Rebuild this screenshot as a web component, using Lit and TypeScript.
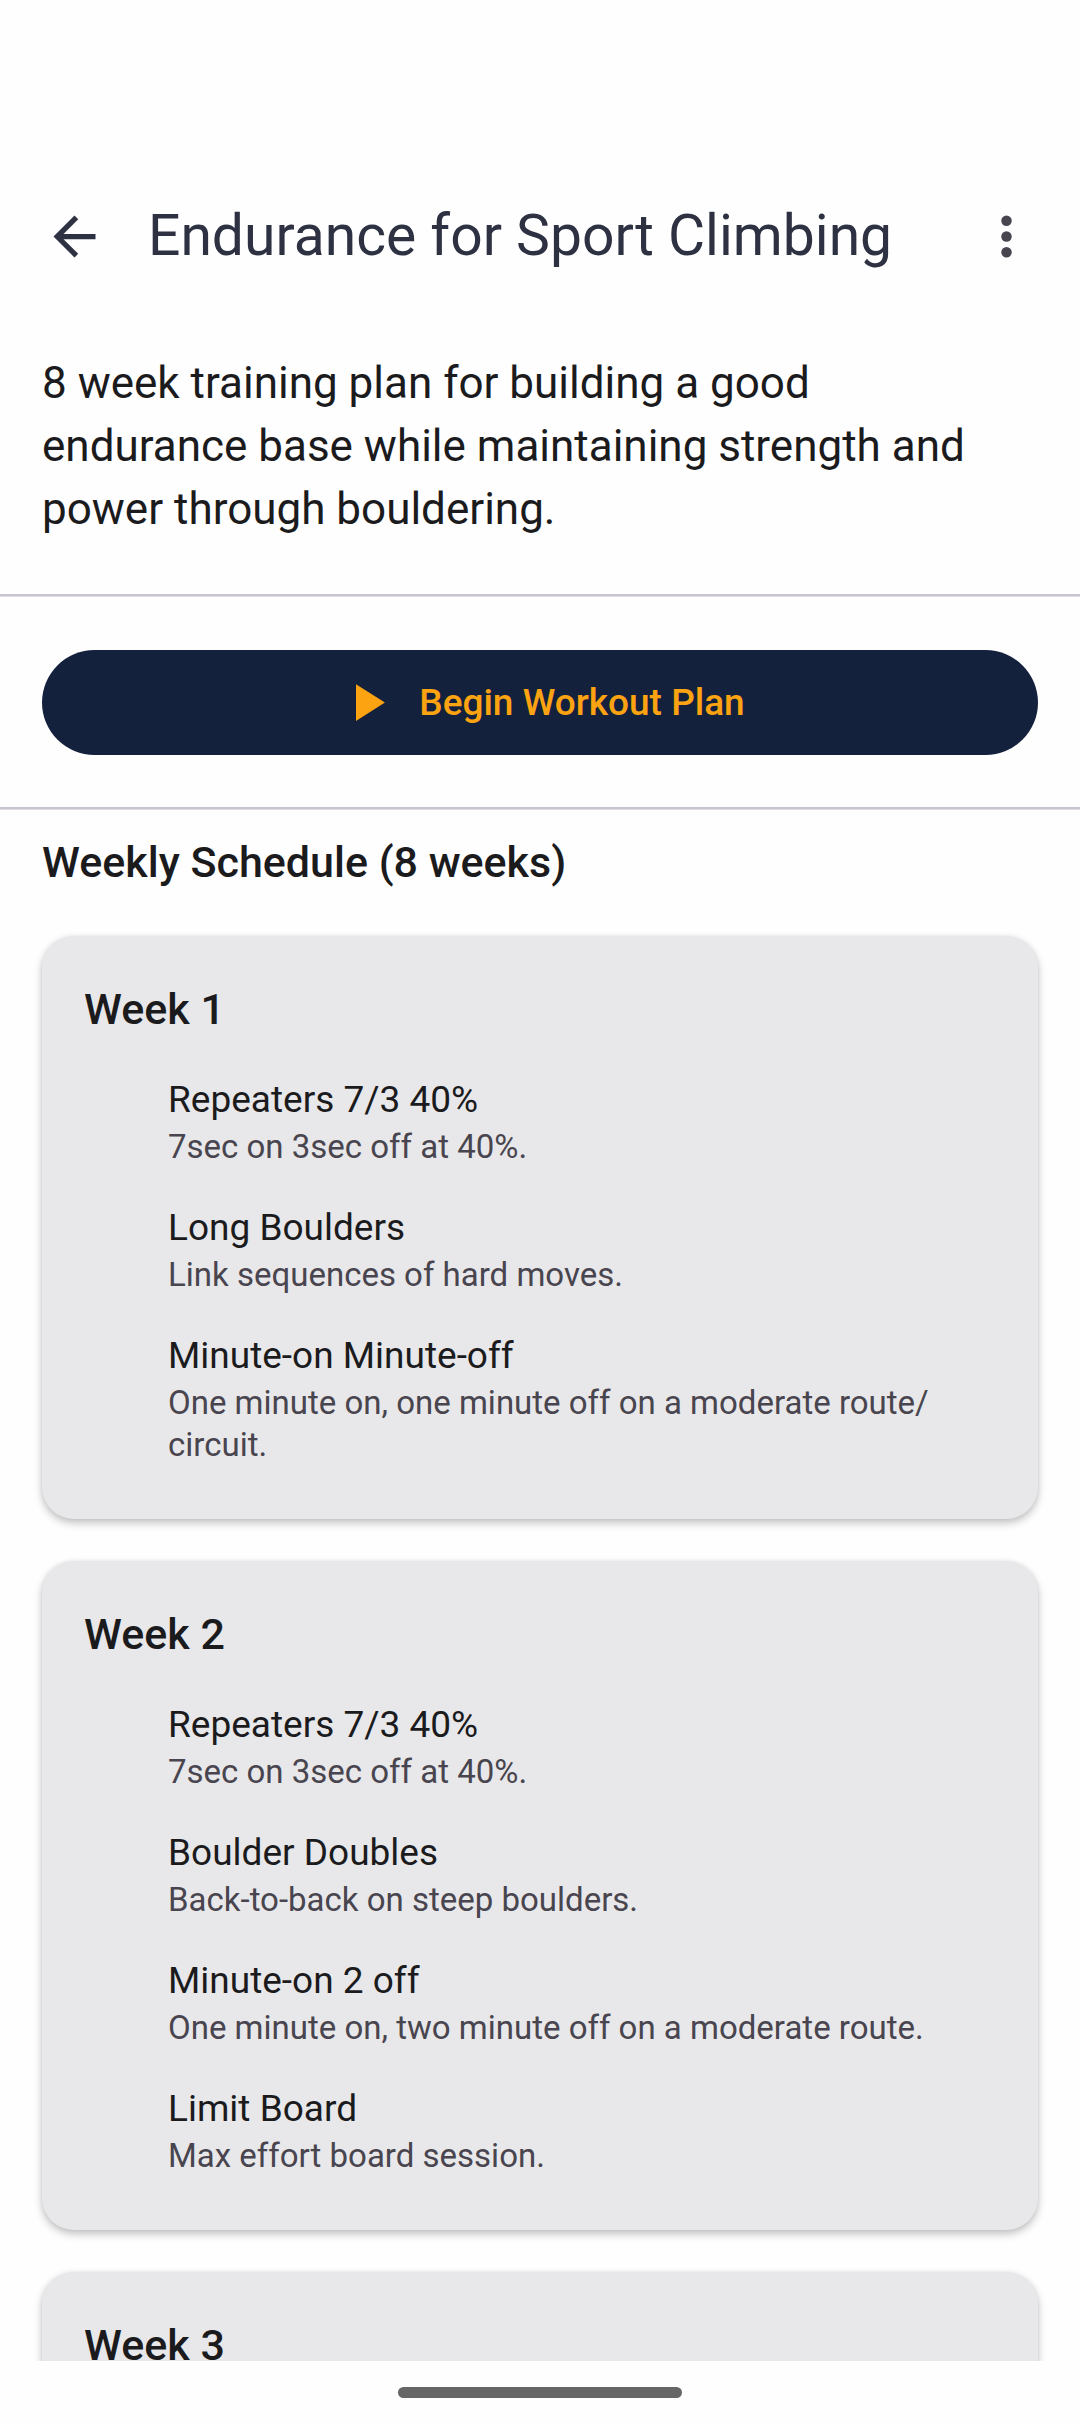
import { LitElement, html, css } from "lit";
import { customElement, property } from "lit/decorators.js";

interface Workout {
  name: string;
  detail: string;
}

interface Week {
  title: string;
  workouts: Workout[];
}

const WEEKS: Week[] = [
  {
    title: "Week 1",
    workouts: [
      { name: "Repeaters 7/3 40%", detail: "7sec on 3sec off at 40%." },
      { name: "Long Boulders", detail: "Link sequences of hard moves." },
      {
        name: "Minute-on Minute-off",
        detail: "One minute on, one minute off on a moderate route/circuit.",
      },
    ],
  },
  {
    title: "Week 2",
    workouts: [
      { name: "Repeaters 7/3 40%", detail: "7sec on 3sec off at 40%." },
      { name: "Boulder Doubles", detail: "Back-to-back on steep boulders." },
      { name: "Minute-on 2 off", detail: "One minute on, two minute off on a moderate route." },
      { name: "Limit Board", detail: "Max effort board session." },
    ],
  },
  { title: "Week 3", workouts: [] },
];

/** Lets a line break after each slash. */
const breakable = (text: string) =>
  text.split("/").map((part, i) => (i === 0 ? part : html`/<wbr />${part}`));

@customElement("week-card")
export class WeekCard extends LitElement {
  @property({ attribute: false }) week: Week = { title: "", workouts: [] };

  static styles = css`
    :host {
      display: block;
    }
    .card {
      padding: 42px 42px 53px;
      border-radius: 32px;
      background: #e8e8ea;
      box-shadow: 0 4px 8px rgba(0, 0, 0, 0.24), 0 0 4px rgba(0, 0, 0, 0.06);
    }
    .title {
      margin: 0;
      font-size: 43px;
      line-height: 63px;
      font-weight: 500;
    }
    .list {
      display: flex;
      flex-direction: column;
      gap: 34px;
      margin: 33px 0 0;
      padding: 0 0 0 84px;
      list-style: none;
    }
    .name,
    .detail {
      margin: 0;
      font-weight: 400;
    }
    .name {
      font-size: 37px;
      line-height: 52px;
    }
    .detail {
      font-size: 33px;
      line-height: 42px;
      color: #49454f;
    }
  `;

  render() {
    return html`
      <article class="card">
        <h3 class="title">${this.week.title}</h3>
        <ul class="list">
          ${this.week.workouts.map(
            (w) => html`<li>
              <h4 class="name">${w.name}</h4>
              <p class="detail">${breakable(w.detail)}</p>
            </li>`
          )}
        </ul>
      </article>
    `;
  }
}

@customElement("app-root")
export class AppRoot extends LitElement {
  static styles = css`
    :host {
      display: flex;
      flex-direction: column;
      height: 100vh;
      background: #fefefe;
      color: #1b1b1d;
      font-family: Roboto, "Liberation Sans", sans-serif;
    }
    .bar {
      display: flex;
      align-items: center;
      flex: none;
      height: 168px;
      padding: 152px 11px 0;
    }
    .icon-button {
      display: grid;
      place-items: center;
      flex: none;
      width: 126px;
      height: 126px;
      padding: 0;
      border: 0;
      background: none;
      color: #2d3142;
    }
    .more {
      color: #49454f;
    }
    .icon {
      width: 63px;
      height: 63px;
      fill: currentColor;
    }
    .heading {
      flex: 1;
      margin: 0 11px;
      font-size: 57px;
      line-height: 74px;
      font-weight: 400;
      color: #2d3142;
    }
    .content {
      flex: 1;
      min-height: 0;
      overflow-y: auto;
      scrollbar-width: none;
    }
    .summary {
      margin: 0;
      padding: 32px 84px 53px 42px;
      font-size: 44px;
      line-height: 63px;
    }
    .rule {
      height: 3px;
      margin: 0;
      border: 0;
      background: linear-gradient(#cac4d0 2px, #dfdbe3 2px);
    }
    .action {
      padding: 53px 42px 52px;
    }
    .begin {
      display: flex;
      align-items: center;
      justify-content: center;
      gap: 21px;
      width: 100%;
      height: 105px;
      padding: 0;
      border: 0;
      border-radius: 53px;
      background: #14213d;
      color: #fca311;
      font-family: inherit;
      font-size: 37px;
      line-height: 53px;
      font-weight: 500;
    }
    .section {
      margin: 0;
      padding: 21px 42px 42px;
      font-size: 43px;
      line-height: 63px;
      font-weight: 500;
    }
    .weeks {
      display: flex;
      flex-direction: column;
      gap: 42px;
      padding: 0 42px 42px;
    }
    .nav {
      display: flex;
      align-items: center;
      justify-content: center;
      flex: none;
      height: 63px;
    }
    .handle {
      width: 284px;
      height: 11px;
      border-radius: 6px;
      background: #666666;
    }
  `;

  render() {
    return html`
      <header class="bar">
        <button class="icon-button" aria-label="Back">
          <svg class="icon" viewBox="0 0 24 24" aria-hidden="true">
            <path d="M20 11H7.83l5.59-5.59L12 4l-8 8 8 8 1.41-1.41L7.83 13H20v-2z" />
          </svg>
        </button>
        <h1 class="heading">Endurance for Sport Climbing</h1>
        <button class="icon-button more" aria-label="More options">
          <svg class="icon" viewBox="0 0 24 24" aria-hidden="true">
            <circle cx="12" cy="6" r="2" />
            <circle cx="12" cy="12" r="2" />
            <circle cx="12" cy="18" r="2" />
          </svg>
        </button>
      </header>
      <main class="content">
        <p class="summary">
          8 week training plan for building a good endurance base while maintaining strength and
          power through bouldering.
        </p>
        <hr class="rule" />
        <div class="action">
          <button class="begin">
            <svg class="icon" viewBox="0 0 24 24" aria-hidden="true">
              <path d="M8 5v14l11-7z" />
            </svg>
            Begin Workout Plan
          </button>
        </div>
        <hr class="rule" />
        <h2 class="section">Weekly Schedule (8 weeks)</h2>
        <div class="weeks">
          ${WEEKS.map((week) => html`<week-card .week=${week}></week-card>`)}
        </div>
      </main>
      <footer class="nav"><div class="handle"></div></footer>
    `;
  }
}
